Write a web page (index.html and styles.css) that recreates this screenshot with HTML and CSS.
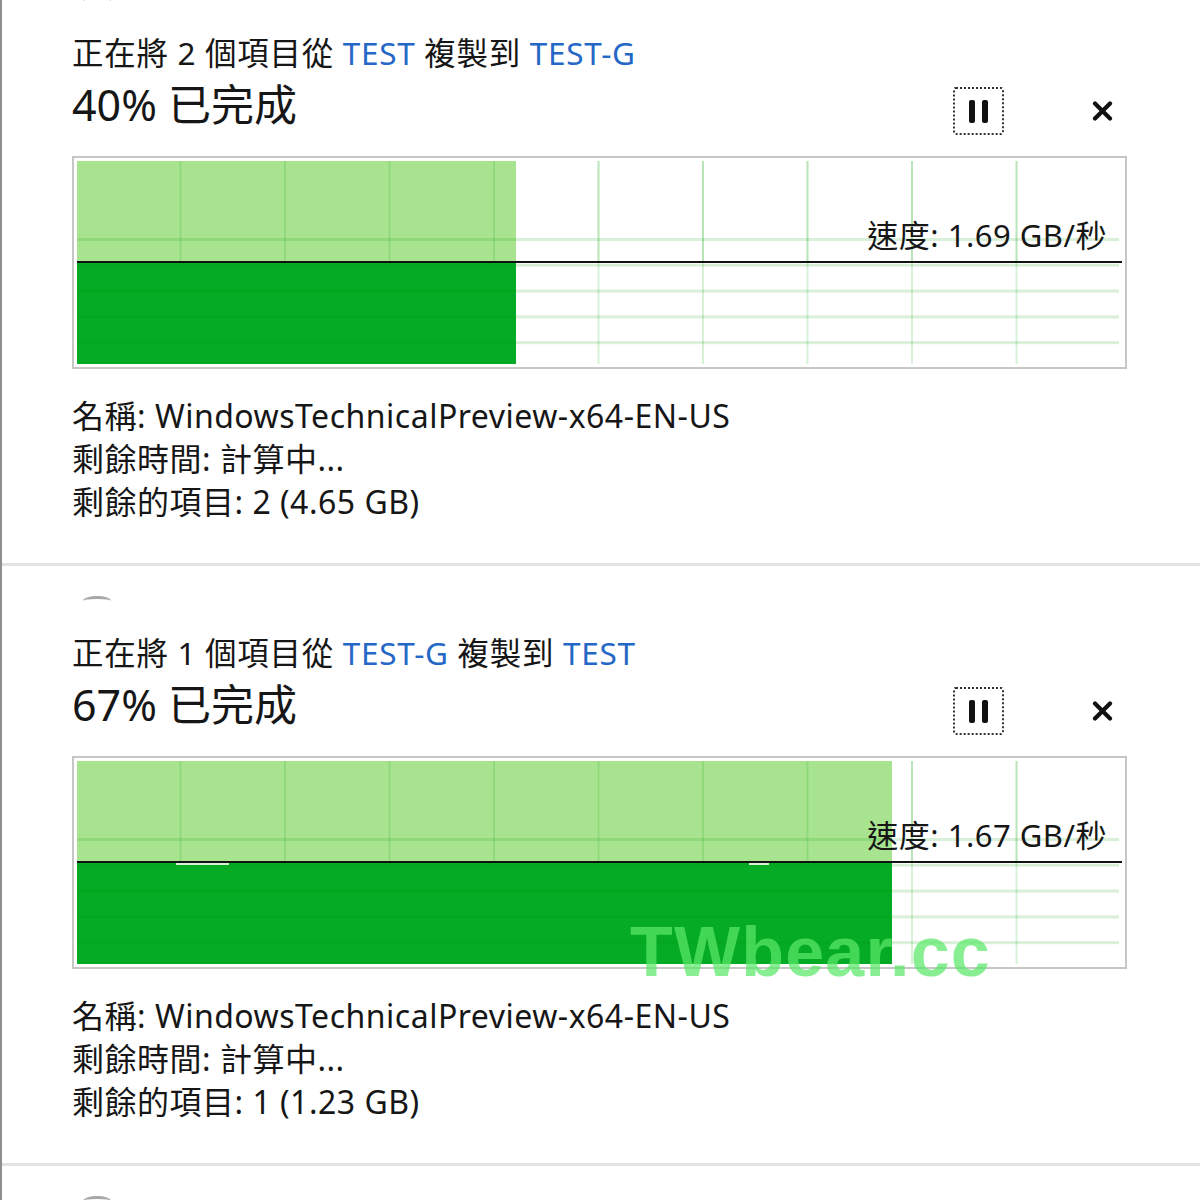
FILE: index.html
```html
<!DOCTYPE html>
<html lang="zh-Hant">
<head>
<meta charset="utf-8">
<title>複製</title>
<link rel="stylesheet" href="styles.css">
</head>
<body>
<div class="window">
  <div class="list">
    <section class="item">
      <div class="spinner"></div>
      <div class="title">正在將 2 個項目從 <span class="link">TEST</span> 複製到 <span class="link">TEST-G</span></div>
      <div class="status-row">
        <div class="percent">40% 已完成</div>
        <div class="controls">
          <button class="pause" aria-label="暫停"><span class="bar"></span><span class="bar"></span></button>
          <button class="close" aria-label="取消">
            <svg width="21" height="20" viewBox="0 0 21 20"><path d="M3 2.5 L18 17.5 M18 2.5 L3 17.5" stroke="#111" stroke-width="4.2" stroke-linecap="round"/></svg>
          </button>
        </div>
      </div>
      <div class="graph">
        <div class="plot">
          <div class="vgrid"></div>
          <div class="fill-light" style="width:439px"></div>
          <div class="fill-dark" style="width:439px"></div>
          <div class="hgrid"></div>
          <div class="vgrid-top"></div>
          <div class="axis"></div>
          <div class="speed">速度: 1.69 GB/秒</div>
        </div>
      </div>
      <div class="details">
        <div>名稱: WindowsTechnicalPreview-x64-EN-US</div>
        <div>剩餘時間: 計算中...</div>
        <div>剩餘的項目: 2 (4.65 GB)</div>
      </div>
    </section>
    <section class="item">
      <div class="spinner"></div>
      <div class="title">正在將 1 個項目從 <span class="link">TEST-G</span> 複製到 <span class="link">TEST</span></div>
      <div class="status-row">
        <div class="percent">67% 已完成</div>
        <div class="controls">
          <button class="pause" aria-label="暫停"><span class="bar"></span><span class="bar"></span></button>
          <button class="close" aria-label="取消">
            <svg width="21" height="20" viewBox="0 0 21 20"><path d="M3 2.5 L18 17.5 M18 2.5 L3 17.5" stroke="#111" stroke-width="4.2" stroke-linecap="round"/></svg>
          </button>
        </div>
      </div>
      <div class="graph">
        <div class="plot">
          <div class="vgrid"></div>
          <div class="fill-light" style="width:815px"></div>
          <div class="fill-dark" style="width:815px"></div>
          <div class="hgrid"></div>
          <div class="vgrid-top"></div>
          <div class="axis"></div>
          <div class="notch" style="left:99px;width:53px"></div>
          <div class="notch" style="left:672px;width:20px"></div>
          <div class="speed">速度: 1.67 GB/秒</div>
        </div>
      </div>
      <div class="details">
        <div>名稱: WindowsTechnicalPreview-x64-EN-US</div>
        <div>剩餘時間: 計算中...</div>
        <div>剩餘的項目: 1 (1.23 GB)</div>
      </div>
    </section>
    <section class="item">
      <div class="spinner"></div>
    </section>
  </div>
  <div class="watermark">TWbear.cc</div>
</div>
</body>
</html>
```

FILE: styles.css
```css
html, body {
  margin: 0;
  padding: 0;
  background: #ffffff;
}

body {
  width: 1200px;
  height: 1200px;
  overflow: hidden;
  font-family: "Noto Sans", "Noto Sans CJK TC", sans-serif;
  color: #161616;
}

.window {
  position: relative;
  height: 1200px;
  border-left: 2px solid #8e8e8e;
  box-sizing: border-box;
  overflow: hidden;
}

.list {
  margin-top: -34px;
}

.item {
  padding: 30px 0 0 70px;
  height: 600px;
  box-sizing: border-box;
  border-bottom: 3px solid #e3e3e3;
}

.spinner {
  width: 28px;
  height: 5px;
  margin-left: 11px;
  border-top: 3px solid #a8a8a8;
  border-radius: 50% 50% 0 0 / 100% 100% 0 0;
  box-sizing: border-box;
  margin-bottom: 32px;
}

.title {
  font-size: 31.5px;
  line-height: 40px;
  height: 40px;
  letter-spacing: 0.7px;
  white-space: nowrap;
}

.link {
  color: #2467c6;
}

.status-row {
  display: flex;
  align-items: flex-start;
  width: 1055px;
  margin-top: 6px;
}

.percent {
  font-size: 43px;
  line-height: 52px;
  flex: 1;
  white-space: nowrap;
}

.controls {
  display: flex;
  align-items: center;
  margin-top: 8px;
}

.pause {
  width: 51px;
  height: 48px;
  border: 2px dotted #333;
  border-radius: 3px;
  background: transparent;
  display: flex;
  align-items: center;
  justify-content: center;
  gap: 7px;
  padding: 0;
  margin-right: 88px;
}

.pause .bar {
  width: 6px;
  height: 23px;
  background: #111;
  border-radius: 2px;
}

.close {
  width: 21px;
  height: 20px;
  border: 0;
  padding: 0;
  background: transparent;
  margin-right: 14px;
  display: block;
}

.close svg {
  display: block;
}

.graph {
  margin-top: 21px;
  width: 1055px;
  height: 213px;
  box-sizing: border-box;
  border: 2px solid #c6c6c6;
  padding: 3px;
}

.plot {
  position: relative;
  width: 100%;
  height: 100%;
  overflow: hidden;
  background: #fff;
}

.vgrid {
  position: absolute;
  left: 0;
  top: 0;
  bottom: 0;
  right: 4px;
  background-image: linear-gradient(to right, transparent 102.5px, #d6f1d6 102.5px, #d6f1d6 105px);
  background-size: 104.5px 100%;
}

.fill-light {
  position: absolute;
  left: 0;
  top: 0;
  height: 100px;
  background: #a8e48f;
}

.fill-dark {
  position: absolute;
  left: 0;
  top: 102px;
  bottom: 0;
  background: #05ab24;
}

.vgrid-top {
  position: absolute;
  left: 0;
  right: 4px;
  top: 0;
  height: 100px;
  background-image: linear-gradient(to right, transparent 102.5px, rgba(0, 150, 0, 0.14) 102.5px, rgba(0, 150, 0, 0.14) 105px);
  background-size: 104.5px 100%;
}

.hgrid {
  position: absolute;
  left: 0;
  right: 3px;
  top: 77px;
  bottom: 0;
  background-image: linear-gradient(to bottom, rgba(0, 150, 0, 0.15) 0, rgba(0, 150, 0, 0.15) 2.5px, transparent 2.5px);
  background-size: 100% 25.8px;
}

.axis {
  position: absolute;
  left: 0;
  right: 0;
  top: 100px;
  height: 2px;
  background: #111;
}

.notch {
  position: absolute;
  top: 102px;
  height: 2px;
  background: #d9eed9;
}

.speed {
  position: absolute;
  right: 15px;
  top: 55px;
  font-size: 31px;
  line-height: 38px;
  letter-spacing: 0.5px;
  white-space: nowrap;
  color: #161616;
}

.details {
  margin-top: 25px;
  font-size: 32px;
  line-height: 43px;
  letter-spacing: 0.5px;
  white-space: nowrap;
}

.watermark {
  position: absolute;
  left: 628px;
  top: 912px;
  font-family: "Liberation Sans", Arial, sans-serif;
  font-weight: bold;
  font-size: 70px;
  line-height: 80px;
  color: rgba(90, 232, 104, 0.72);
  letter-spacing: 1.2px;
}
```
